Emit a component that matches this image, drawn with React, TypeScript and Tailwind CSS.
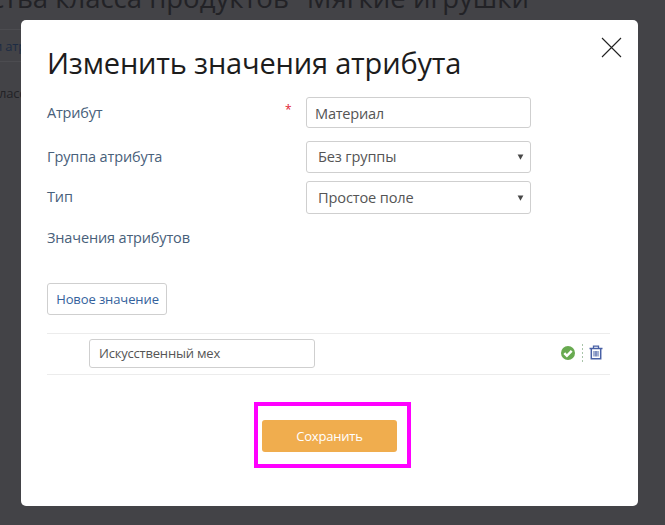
import React from "react";

function Select({ value, spacing }: { value: string; spacing: string }) {
  return (
    <div className="flex w-[225px] items-center justify-between rounded-[3px] border border-[#cfcfcf] pr-[6px] pl-[11px] text-[14.6px] text-[#555]">
      <span className={spacing}>{value}</span>
      <svg width="7" height="6" viewBox="0 0 7 6">
        <path d="M0.6 0.5h5.8L3.5 5.7z" fill="#484848" />
      </svg>
    </div>
  );
}

function Page() {
  return (
    <div className="h-[525px] w-[665px] overflow-hidden bg-[#434347] whitespace-nowrap">
      <div className="-mt-[21px] flex h-[50px] w-[529px] justify-end text-[27.5px] leading-[38px] text-[#222226]">
        <span>ства класса продуктов &quot;Мягкие игрушки</span>
      </div>
      <div className="flex h-[33px] w-[120px] items-center border-y border-[#4c4c50] text-[13px] text-[#1d2c44]">
        <span className="-ml-[6px] pt-[2px] tracking-[-0.2px]">и атр</span>
      </div>
      <div className="-ml-[1px] pt-[21px] text-[13px] leading-5 tracking-[-0.2px] text-[#222226]">ласс</div>
    </div>
  );
}

export default function App() {
  return (
    <div className="relative h-[525px] w-[665px] overflow-hidden font-['Open_Sans','Noto_Sans',sans-serif]">
      <Page />
      <div className="absolute top-[20px] left-[21px] flex h-[485.5px] w-[617px] flex-col rounded-[5px] bg-white pr-[28px] pl-[26px] whitespace-nowrap">
        <div className="flex h-[77px] justify-between">
          <h1 className="pt-[23px] text-[29px] leading-[40px] tracking-[-0.18px] text-[#1c1c1c]">Изменить значения атрибута</h1>
          <svg className="mt-[17px] -mr-[12px]" width="21" height="21" viewBox="0 0 21 21">
            <path d="M1 1l19 19M20 1L1 20" stroke="#222" strokeWidth="1.1" fill="none" />
          </svg>
        </div>
        <div className="flex h-[31px] text-[14.5px] text-[#48607a]">
          <span className="w-[238px] leading-[31px] tracking-[-0.2px]">Атрибут</span>
          <span className="w-[21px] pt-[3px] text-[12px] leading-[20px] text-[#e02030]">*</span>
          <div className="flex w-[225px] items-center rounded-[3px] border border-[#cfcfcf] pt-[2px] pl-[8px] text-[14.6px] tracking-[-0.25px] text-[#555]">
            Материал
          </div>
        </div>
        <div className="mt-[13px] flex h-[32px] text-[14.5px] text-[#48607a]">
          <span className="w-[259px] leading-[31px] tracking-[-0.13px]">Группа атрибута</span>
          <Select value="Без группы" spacing="tracking-[-0.15px]" />
        </div>
        <div className="mt-[8px] flex h-[33px] text-[14.5px] text-[#48607a]">
          <span className="w-[259px] leading-[32px] tracking-[-0.15px]">Тип</span>
          <Select value="Простое поле" spacing="tracking-[-0.15px]" />
        </div>
        <div className="mt-[14px] text-[14.5px] leading-[20px] tracking-[-0.15px] text-[#48607a]">Значения атрибутов</div>
        <button className="mt-[35px] h-[32px] w-[120px] shrink-0 rounded-[3px] border border-[#cfcfcf] pt-[2px] pl-[1px] text-[13px] tracking-[-0.1px] text-[#34619c]">
          Новое значение
        </button>
        <div className="mt-[18px] flex h-[42px] w-[563px] shrink-0 items-center border-y border-[#ececec] pl-[42px]">
          <div className="-mt-[2px] flex h-[29px] w-[226px] items-center rounded-[3px] border border-[#cfcfcf] pt-[1px] pl-[9px] text-[13px] tracking-[-0.2px] text-[#555]">
            Искусственный мех
          </div>
          <svg className="-mt-[2px] ml-[245.5px]" width="14" height="14" viewBox="0 0 14 14">
            <circle cx="7" cy="7" r="7" fill="#68aa50" />
            <path d="M3.3 7.1l2.6 2.7 4.8-4.9" fill="none" stroke="#fff" strokeWidth="2.5" />
          </svg>
          <svg className="-mt-[1px] ml-[6px]" width="3" height="19" viewBox="0 0 3 19">
            <path d="M1.5 0v19" stroke="#a9c4a9" strokeWidth="1" strokeDasharray="2 2" />
          </svg>
          <svg className="-mt-[3px] ml-[5px]" width="14" height="15" viewBox="0 0 14 15" fill="none" stroke="#4860a5">
            <path d="M0.5 3.5h13" strokeWidth="1.5" />
            <path d="M4.5 3V1.2h5V3" strokeWidth="1.3" />
            <path d="M2.3 4v9.7h9.4V4" strokeWidth="1.5" />
            <path d="M5 6v5.5M9 6v5.5" strokeWidth="1" />
            <path d="M7 6v5.5" strokeWidth="1.4" />
          </svg>
        </div>
        <div className="mt-[27px] ml-[207px] flex h-[66px] w-[157px] shrink-0 border-4 border-[#ff00ff] pt-[14px] pl-[4px]">
          <button className="h-[32px] w-[135px] rounded-[3px] bg-[#f0ad4e] pt-[2px] text-[13px] tracking-[-0.2px] text-white">Сохранить</button>
        </div>
      </div>
    </div>
  );
}
